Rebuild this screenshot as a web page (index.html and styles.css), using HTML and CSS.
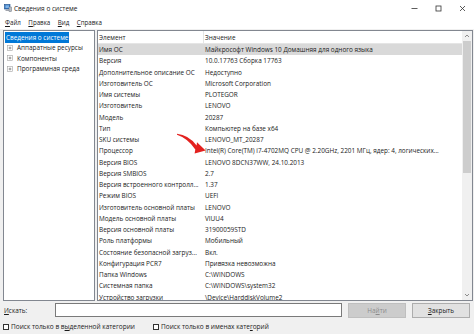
FILE: index.html
```html
<!DOCTYPE html>
<html lang="ru">
<head>
    <meta charset="UTF-8">
    <title>Сведения о системе</title>
    <link rel="stylesheet" href="styles.css">
</head>
<body>
    <div class="titlebar">
        <svg class="app-icon" width="8" height="8" viewBox="0 0 8 8">
            <rect x="0.5" y="0.5" width="5.5" height="4.5" fill="#2f6fb8" stroke="#1d4f8a" stroke-width="0.6"/>
            <rect x="1.4" y="1.3" width="3.7" height="2.8" fill="#7db4ea"/>
            <rect x="5" y="3" width="2.6" height="4.6" fill="#b9bec6" stroke="#6f7680" stroke-width="0.5"/>
            <rect x="1.5" y="5.6" width="3.5" height="1.2" fill="#8a9099"/>
        </svg>
        <span class="title">Сведения о системе</span>
        <div class="controls">
            <span><svg width="7" height="7" viewBox="0 0 7 7"><line x1="0.5" y1="3.5" x2="6.5" y2="3.5" stroke="#333" stroke-width="0.8"/></svg></span>
            <span><svg width="7" height="7" viewBox="0 0 7 7"><rect x="1" y="1" width="5" height="5" fill="none" stroke="#333" stroke-width="0.8"/></svg></span>
            <span><svg width="7" height="7" viewBox="0 0 7 7"><path d="M1 1 L6 6 M6 1 L1 6" stroke="#333" stroke-width="0.8"/></svg></span>
        </div>
    </div>

    <div class="menubar">
        <span><u>Ф</u>айл</span>
        <span><u>П</u>равка</span>
        <span><u>В</u>ид</span>
        <span><u>С</u>правка</span>
    </div>

    <div class="main">
        <div class="tree">
            <div class="tree-item"><span class="selected">Сведения о системе</span></div>
            <div class="tree-item"><svg class="plus" width="6" height="6" viewBox="0 0 6 6"><rect x="0.5" y="0.5" width="5" height="5" fill="#fff" stroke="#a0a0a0" stroke-width="0.6"/><path d="M1.6 3 H4.4 M3 1.6 V4.4" stroke="#555" stroke-width="0.6"/></svg>Аппаратные ресурсы</div>
            <div class="tree-item"><svg class="plus" width="6" height="6" viewBox="0 0 6 6"><rect x="0.5" y="0.5" width="5" height="5" fill="#fff" stroke="#a0a0a0" stroke-width="0.6"/><path d="M1.6 3 H4.4 M3 1.6 V4.4" stroke="#555" stroke-width="0.6"/></svg>Компоненты</div>
            <div class="tree-item"><svg class="plus" width="6" height="6" viewBox="0 0 6 6"><rect x="0.5" y="0.5" width="5" height="5" fill="#fff" stroke="#a0a0a0" stroke-width="0.6"/><path d="M1.6 3 H4.4 M3 1.6 V4.4" stroke="#555" stroke-width="0.6"/></svg>Программная среда</div>
        </div>

        <div class="list">
            <div class="list-view">
                <div class="list-header">
                    <span class="cell name">Элемент</span>
                    <span class="cell">Значение</span>
                </div>
                <div class="row selected"><span class="cell name">Имя ОС</span><span class="cell">Майкрософт Windows 10 Домашняя для одного языка</span></div>
                <div class="row"><span class="cell name">Версия</span><span class="cell">10.0.17763 Сборка 17763</span></div>
                <div class="row"><span class="cell name">Дополнительное описание ОС</span><span class="cell">Недоступно</span></div>
                <div class="row"><span class="cell name">Изготовитель ОС</span><span class="cell">Microsoft Corporation</span></div>
                <div class="row"><span class="cell name">Имя системы</span><span class="cell">PLOTEGOR</span></div>
                <div class="row"><span class="cell name">Изготовитель</span><span class="cell">LENOVO</span></div>
                <div class="row"><span class="cell name">Модель</span><span class="cell">20287</span></div>
                <div class="row"><span class="cell name">Тип</span><span class="cell">Компьютер на базе x64</span></div>
                <div class="row"><span class="cell name">SKU системы</span><span class="cell">LENOVO_MT_20287</span></div>
                <div class="row"><span class="cell name">Процессор</span><span class="cell">Intel(R) Core(TM) i7-4702MQ CPU @ 2.20GHz, 2201 МГц, ядер: 4, логических...</span></div>
                <div class="row"><span class="cell name">Версия BIOS</span><span class="cell">LENOVO 8DCN37WW, 24.10.2013</span></div>
                <div class="row"><span class="cell name">Версия SMBIOS</span><span class="cell">2.7</span></div>
                <div class="row"><span class="cell name">Версия встроенного контролл...</span><span class="cell">1.37</span></div>
                <div class="row"><span class="cell name">Режим BIOS</span><span class="cell">UEFI</span></div>
                <div class="row"><span class="cell name">Изготовитель основной платы</span><span class="cell">LENOVO</span></div>
                <div class="row"><span class="cell name">Модель основной платы</span><span class="cell">VIUU4</span></div>
                <div class="row"><span class="cell name">Версия основной платы</span><span class="cell">31900059STD</span></div>
                <div class="row"><span class="cell name">Роль платформы</span><span class="cell">Мобильный</span></div>
                <div class="row"><span class="cell name">Состояние безопасной загруз...</span><span class="cell">Вкл.</span></div>
                <div class="row"><span class="cell name">Конфигурация PCR7</span><span class="cell">Привязка невозможна</span></div>
                <div class="row"><span class="cell name">Папка Windows</span><span class="cell">C:\WINDOWS</span></div>
                <div class="row"><span class="cell name">Системная папка</span><span class="cell">C:\WINDOWS\system32</span></div>
                <div class="row"><span class="cell name">Устройство загрузки</span><span class="cell">\Device\HarddiskVolume2</span></div>
            </div>
            <div class="vscroll">
                <div class="sb-btn"><svg width="6" height="4" viewBox="0 0 6 4"><path d="M1 3 L3 1 L5 3" fill="none" stroke="#606060" stroke-width="0.7"/></svg></div>
                <div class="sb-track"><div class="sb-thumb"></div></div>
                <div class="sb-btn"><svg width="6" height="4" viewBox="0 0 6 4"><path d="M1 1 L3 3 L5 1" fill="none" stroke="#606060" stroke-width="0.7"/></svg></div>
            </div>
        </div>
    </div>

    <div class="search">
        <label class="search-label"><u>И</u>скать:</label>
        <div class="search-input"></div>
        <button class="btn disabled">На<u>й</u>ти</button>
        <button class="btn"><u>З</u>акрыть</button>
    </div>

    <div class="options">
        <div class="option first"><span class="check"></span>Поиск только в в<u>ы</u>деленной категории</div>
        <div class="option"><span class="check"></span>Поиск только в именах кате<u>г</u>орий</div>
    </div>

    <svg class="arrow" width="474" height="334" viewBox="0 0 474 334">
        <path d="M177 133.8 Q188.5 135 196.6 145.4 L197 142.2 L205.6 150.6 L194.6 153.4 L195.3 149.4 Q187.5 138.2 177 134.8 Z" fill="#e3211f"/>
    </svg>
</body>
</html>
```

FILE: styles.css
```css
* {
    box-sizing: border-box;
}

body {
    margin: 0;
    width: 474px;
    height: 334px;
    overflow: hidden;
    position: relative;
    background: #f0f0f0;
    font-family: "Open Sans", "Noto Sans", sans-serif;
    font-size: 6.4px;
    color: #1a1a1a;
}

.titlebar {
    height: 16px;
    background: #fff;
    display: flex;
    align-items: center;
}

.app-icon {
    margin-left: 4px;
}

.title {
    flex: 1;
    margin-left: 2px;
    font-size: 6.5px;
}

.controls {
    display: flex;
    align-self: stretch;
}

.controls span {
    width: 24px;
    display: flex;
    align-items: center;
    justify-content: center;
}

.menubar {
    height: 13px;
    background: #fff;
    display: flex;
    align-items: center;
    gap: 7.5px;
    padding-left: 5px;
    font-size: 6.2px;
}

.main {
    display: flex;
    gap: 2px;
    height: 272px;
    padding: 1px 1px 0 3px;
}

/* дерево слева */
.tree {
    width: 92px;
    background: #fff;
    border: 1px solid #828790;
    padding-top: 1px;
}

.tree-item {
    height: 10.5px;
    display: flex;
    align-items: center;
    white-space: nowrap;
}

.tree-item .selected {
    margin-left: 1px;
    padding: 1px 1px;
    background: #0078d7;
    color: #fff;
}

.tree-item .plus {
    margin: 0 4px 0 3px;
}

/* список справа */
.list {
    flex: 1;
    display: flex;
    background: #fff;
    border: 1px solid #828790;
    overflow: hidden;
}

.list-view {
    flex: 1;
    overflow: hidden;
}

.list-header,
.row {
    display: grid;
    grid-template-columns: 106px 1fr;
    align-items: center;
}

.list-header {
    height: 13px;
    border-bottom: 1px solid #e5e5e5;
}

.list-header .name {
    border-right: 1px solid #e5e5e5;
    align-self: stretch;
    display: flex;
    align-items: center;
}

.row {
    height: 11.25px;
}

.row.selected {
    background: #d9d9d9;
}

.cell {
    padding-left: 1px;
    white-space: nowrap;
    overflow: hidden;
    text-overflow: ellipsis;
}

.vscroll {
    width: 10px;
    display: flex;
    flex-direction: column;
    background: #f0f0f0;
}

.sb-btn {
    height: 10px;
    display: flex;
    align-items: center;
    justify-content: center;
}

.sb-track {
    flex: 1;
    padding: 0 1px;
}

.sb-thumb {
    height: 132px;
    background: #cdcdcd;
}

/* строка поиска */
.search {
    height: 18px;
    display: flex;
    align-items: center;
    padding-left: 4px;
}

.search-label {
    width: 51px;
}

.search-input {
    width: 287px;
    height: 14px;
    background: #fff;
    border: 1px solid #7a7a7a;
}

.btn {
    width: 58px;
    height: 15px;
    margin-left: 6px;
    padding: 0;
    font-family: inherit;
    font-size: 6.4px;
    color: #1a1a1a;
    background: #e1e1e1;
    border: 1px solid #adadad;
}

.btn.disabled {
    color: #8c8c8c;
    background: #cccccc;
    border-color: #bfbfbf;
}

.options {
    height: 15px;
    display: flex;
    align-items: center;
    padding-left: 3px;
    font-size: 6.5px;
}

.option {
    display: flex;
    align-items: center;
    white-space: nowrap;
}

.option.first {
    width: 150px;
}

.check {
    width: 6px;
    height: 6px;
    margin-right: 2px;
    background: #fff;
    border: 1px solid #333;
}

.arrow {
    position: absolute;
    left: 0;
    top: 0;
    pointer-events: none;
}
```
